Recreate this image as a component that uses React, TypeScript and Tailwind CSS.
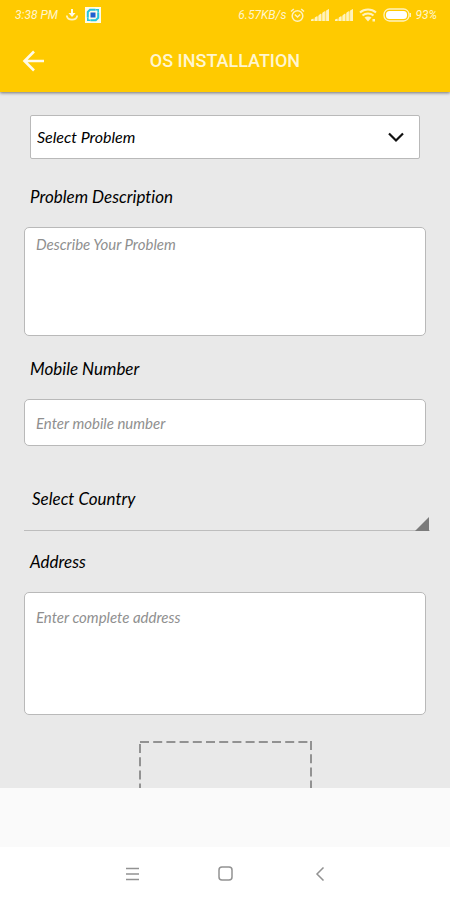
import React, { useState } from 'react';

const labelClass = 'block pl-[6px] text-[17px] leading-6 text-black italic';
const fieldClass =
  'block w-full resize-none rounded-[5px] border border-[#b9b9b9] bg-white px-[11px] text-[15px] leading-5 text-black italic outline-none placeholder:text-[#8f8f8f]';

const SignalIcon: React.FC = () => (
  <svg width="18" height="14" viewBox="0 0 18 14" aria-hidden="true">
    <path d="M0 13L18 1v12z" fill="#fff3c0" opacity="0.5" />
    <path d="M0 13v-1.500l2.500-1V13zM3.800 13V9.500l2.500-1.500v5zM7.600 13V7.300L10 5.500V13zM11.400 13V4.800L13.800 3v10zM15.200 13V2.500L18 1v12z" fill="#fff3c0" />
  </svg>
);

const StatusBar: React.FC = () => (
  <div className="flex h-[30px] items-center pr-[13px] pl-[15px] font-['Roboto',sans-serif] text-[12px] leading-4 text-[#fff5cc] italic">
    <span>3:38 PM</span>
    <svg className="ml-2" width="12" height="12" viewBox="0 0 12 12" aria-hidden="true">
      <path d="M5 0h2v4h2.500L6 8 2.500 4H5z" fill="#fffbe6" />
      <path d="M.8 6.500c.5 5.500 9.900 5.500 10.400 0" fill="none" stroke="#fff3c0" strokeWidth="1.8" />
    </svg>
    <svg className="ml-[7px]" width="16" height="16" viewBox="0 0 16 16" aria-hidden="true">
      <rect width="16" height="16" fill="#fffbe6" />
      <path d="M2.800 10.500V5l2.200-2.200h5.500M5.500 13.200h5.300l2.400-2.400V5.500" fill="none" stroke="#25c4dd" strokeWidth="2" />
      <path d="M10.500 2.800h2.700v2.700M2.800 10.500v2.700h2.700" fill="none" stroke="#25c4dd" strokeWidth="1.600" />
      <path d="M5.500 5.500h5v5h-5z" fill="#1f5fd0" />
    </svg>
    <span className="ml-auto">6.57KB/s</span>
    <svg className="ml-1" width="15" height="15" viewBox="0 0 15 15" fill="none" stroke="#fff3c0" strokeWidth="1.500" aria-hidden="true">
      <circle cx="7.500" cy="8" r="5.300" />
      <path d="M1 3.500L3.800 1M14 3.500L11.200 1M4.800 6.500l2.700 2.500L10.200 6.500" />
    </svg>
    <span className="ml-[6px]"><SignalIcon /></span>
    <span className="ml-[6px]"><SignalIcon /></span>
    <svg className="ml-[6px]" width="18" height="14" viewBox="0 0 18 14" fill="none" stroke="#fff3c0" strokeWidth="2" aria-hidden="true">
      <path d="M1 4.500c4.500-4 11.500-4 16 0M3.500 7.500c3-2.800 8-2.800 11 0" />
      <path d="M5.500 9.500c2-1.500 5-1.500 7 0L9 13.500zM13.500 11h2.500v2.500h-2.500z" fill="#fff3c0" stroke="none" />
    </svg>
    <svg className="ml-[6px]" width="28" height="14" viewBox="0 0 28 14" aria-hidden="true">
      <rect x="1" y="1" width="25" height="12" rx="5.500" fill="none" stroke="#fff3c0" strokeWidth="1.300" />
      <rect x="3" y="3" width="21" height="8" rx="3.500" fill="#fff" />
      <path d="M26.500 5h1.500v4h-1.500z" fill="#fff3c0" />
    </svg>
    <span className="ml-1">93%</span>
  </div>
);

const App: React.FC = () => {
  const [description, setDescription] = useState('');
  const [mobile, setMobile] = useState('');
  const [address, setAddress] = useState('');

  return (
    <div className="flex h-screen flex-col overflow-hidden bg-[#fafafa] font-['Lato','Liberation_Sans',sans-serif] [font-variant-ligatures:none]">
      <header className="relative z-10 shrink-0 bg-[#ffca00] shadow-[0_1px_3px_rgba(0,0,0,0.5)]">
        <StatusBar />
        <div className="grid h-[62px] grid-cols-[1fr_auto_1fr] items-center">
          <button type="button" aria-label="Back" className="ml-[22px] w-[23px]">
            <svg width="23" height="22" viewBox="0 0 23 22" fill="none" stroke="#fffbe8" strokeWidth="2.600" aria-hidden="true">
              <path d="M22 11H2.500M12 1.500L2.500 11l9.500 9.500" />
            </svg>
          </button>
          <h1 className="font-['Roboto',sans-serif] text-[18px] leading-6 font-medium text-[#fff6d0]">OS INSTALLATION</h1>
        </div>
      </header>

      <main className="min-h-0 flex-1 overflow-hidden bg-[#e9e9e9] px-6 pt-[23px]">
        <div className="relative mx-[6px]">
          <select
            aria-label="Select Problem"
            className="block h-11 w-full appearance-none rounded-[2px] border border-[#b9b9b9] bg-white pl-[6px] text-[16px] text-black italic outline-none"
          >
            <option>Select Problem</option>
          </select>
          <svg className="pointer-events-none absolute top-[17px] right-4" width="16" height="11" viewBox="0 0 16 11" fill="none" stroke="#111" strokeWidth="2.200" aria-hidden="true">
            <path d="M1 1.500L8 8.500l7-7" />
          </svg>
        </div>

        <label htmlFor="description" className={`${labelClass} mt-[26px] mb-[18px]`}>Problem Description</label>
        <textarea
          id="description"
          className={`${fieldClass} h-[109px] pt-[6px]`}
          placeholder="Describe Your Problem"
          value={description}
          onChange={(e) => setDescription(e.target.value)}
        />

        <label htmlFor="mobile" className={`${labelClass} mt-[21px] mb-[18px]`}>Mobile Number</label>
        <input
          id="mobile"
          type="tel"
          className={`${fieldClass} h-[47px]`}
          placeholder="Enter mobile number"
          value={mobile}
          onChange={(e) => setMobile(e.target.value)}
        />

        <div className="relative -mr-1 mt-[22px]">
          <select
            aria-label="Select Country"
            className="block h-[63px] w-full appearance-none border-b border-[#bdbdbd] pl-2 text-[17px] text-black italic outline-none"
          >
            <option>Select Country</option>
          </select>
          <svg className="pointer-events-none absolute right-0 bottom-0" width="15" height="14" viewBox="0 0 15 14" fill="#7b7b7b" aria-hidden="true">
            <path d="M14 0v14H0z" />
          </svg>
        </div>

        <label htmlFor="address" className={`${labelClass} mt-[19px] mb-[18px]`}>Address</label>
        <textarea
          id="address"
          className={`${fieldClass} h-[123px] pt-[14px]`}
          placeholder="Enter complete address"
          value={address}
          onChange={(e) => setAddress(e.target.value)}
        />

        <button type="button" aria-label="Add photo" className="mx-auto mt-[25px] block w-[173px]">
          <svg width="173" height="120" viewBox="0 0 173 120" fill="none" stroke="#929292" strokeWidth="2" aria-hidden="true">
            <path d="M1 2h171" strokeDasharray="9 4.200" />
            <path d="M172 1v118" strokeDasharray="9 4.200" />
            <path d="M1 4v115" strokeDasharray="9 4.200" />
          </svg>
        </button>
      </main>

      <div className="h-[59px] shrink-0 bg-[#fafafa]" />

      <nav className="flex h-[53px] shrink-0 items-center justify-center gap-[78px] bg-white">
        <button type="button" aria-label="Menu">
          <svg width="14" height="14" viewBox="0 0 14 14" stroke="#929292" strokeWidth="1.400" aria-hidden="true">
            <path d="M0 1.500h13M0 7h13M0 12.500h13" />
          </svg>
        </button>
        <button type="button" aria-label="Home">
          <svg width="15" height="15" viewBox="0 0 15 15" fill="none" stroke="#929292" strokeWidth="1.500" aria-hidden="true">
            <rect x="1" y="1" width="13" height="13" rx="3" />
          </svg>
        </button>
        <button type="button" aria-label="Previous">
          <svg width="14" height="14" viewBox="0 0 14 14" fill="none" stroke="#929292" strokeWidth="1.500" aria-hidden="true">
            <path d="M12.500 .5L6 7l6.500 6.500" />
          </svg>
        </button>
      </nav>
    </div>
  );
};

export default App;
